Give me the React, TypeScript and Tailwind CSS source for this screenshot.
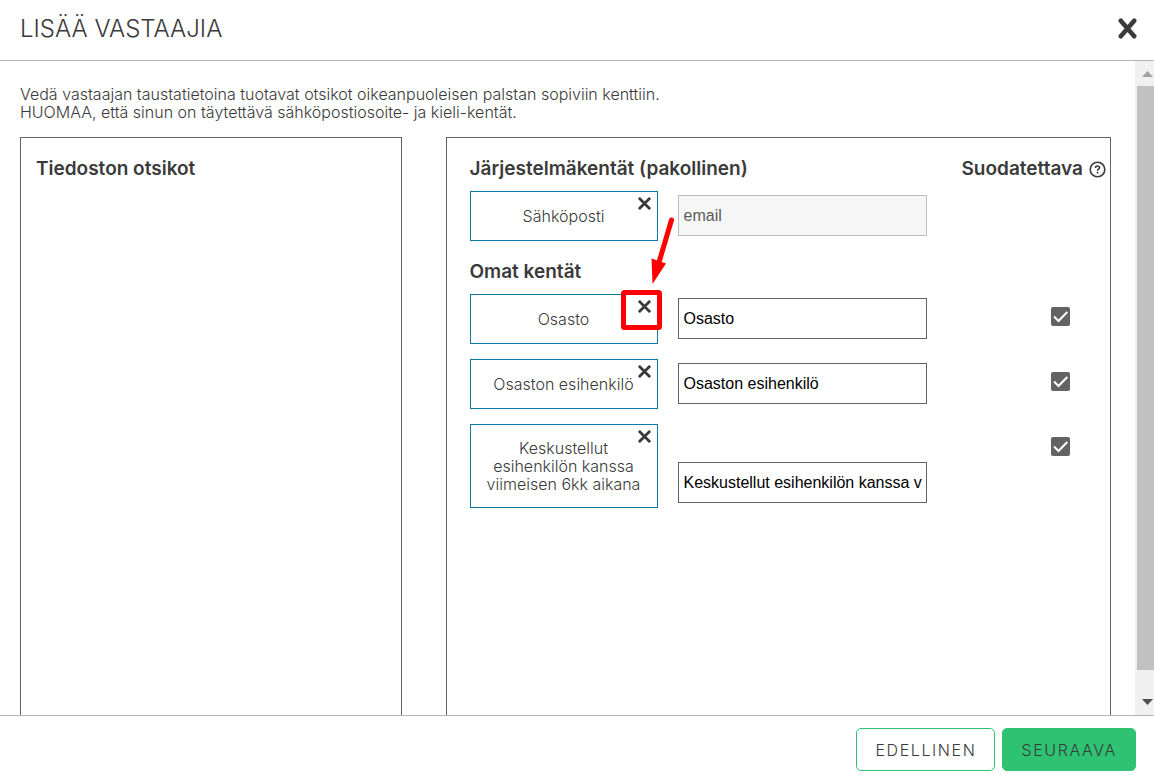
import { useState } from "react";

type Field = {
  id: string;
  label: string;
  value: string;
  highlighted?: boolean;
};

const ownFields: Field[] = [
  { id: "osasto", label: "Osasto", value: "Osasto", highlighted: true },
  {
    id: "esihenkilo",
    label: "Osaston esihenkilö",
    value: "Osaston esihenkilö",
  },
  {
    id: "keskustellut",
    label: "Keskustellut esihenkilön kanssa viimeisen 6kk aikana",
    value: "Keskustellut esihenkilön kanssa viimeisen 6kk aikana",
  },
];

function CloseIcon({ className }: { className: string }) {
  return (
    <svg
      viewBox="0 0 13 13"
      className={className}
      fill="none"
      stroke="currentColor"
      strokeWidth="2.8"
      aria-hidden="true"
    >
      <path d="M.9.9 12.1 12.1M12.1.9.9 12.1" />
    </svg>
  );
}

// Red frame round the remove button, with the arrow that points at it
function Highlight() {
  return (
    <svg
      viewBox="0 0 60 120"
      className="pointer-events-none absolute -top-[82px] -right-[22px] z-10 h-[120px] w-[60px]"
      fill="none"
      aria-hidden="true"
    >
      <rect
        x="4.5"
        y="79.5"
        width="36"
        height="35"
        rx="1"
        stroke="#ff0000"
        strokeWidth="5"
      />
      <path
        d="M52.5 7 39.5 51"
        stroke="#ff0000"
        strokeWidth="5"
        strokeLinecap="round"
      />
      <path d="M32.5 45.5 47 50.5 33.5 71Z" fill="#ff0000" />
    </svg>
  );
}

function Chip({ label, highlighted }: { label: string; highlighted?: boolean }) {
  return (
    <div className="relative flex min-h-[50px] w-[188px] shrink-0 items-center justify-center border border-[#0a7aa8] px-2 pt-[14px] pb-[14px] text-center text-base leading-[18px] font-light">
      {label}
      <button
        type="button"
        aria-label={`Poista ${label}`}
        className="absolute top-[5px] right-[6px]"
      >
        <CloseIcon className="size-[13px]" />
      </button>
      {highlighted && <Highlight />}
    </div>
  );
}

function FieldRow({ field }: { field: Field }) {
  const [value, setValue] = useState(field.value);
  return (
    <div className="flex items-end gap-5 pr-10">
      <Chip label={field.label} highlighted={field.highlighted} />
      <input
        type="text"
        aria-label={field.label}
        value={value}
        onChange={(e) => setValue(e.target.value)}
        className="mb-[5px] h-[41px] w-[249px] border border-[#636363] bg-white pr-1 pl-[5px] font-['Liberation_Sans',sans-serif] text-base text-black"
      />
      <span className="relative mt-[13px] ml-auto size-[19px] self-start">
        <input
          type="checkbox"
          defaultChecked
          aria-label={`Suodatettava: ${field.label}`}
          className="peer block size-[19px] appearance-none rounded-xs border-2 border-[#636363] bg-white checked:bg-[#636363]"
        />
        <svg
          viewBox="0 0 19 19"
          className="pointer-events-none absolute inset-0 hidden peer-checked:block"
          fill="none"
          stroke="white"
          strokeWidth="2"
          aria-hidden="true"
        >
          <path d="M3 9.5 7.5 14 16.3 5" />
        </svg>
      </span>
    </div>
  );
}

export default function App() {
  return (
    <div className="flex h-screen flex-col bg-white font-[Inter,sans-serif] text-[#3a3a3a]">
      {/* Header */}
      <header className="flex h-[61px] shrink-0 items-center justify-between border-b border-[#b5b5b5] pr-[17px] pb-[3px] pl-5">
        <h1 className="text-2xl leading-7 font-light">LISÄÄ VASTAAJIA</h1>
        <button type="button" aria-label="Sulje">
          <svg
            viewBox="0 0 19 21"
            className="h-[21px] w-[19px]"
            fill="none"
            stroke="currentColor"
            strokeWidth="4.6"
            strokeLinecap="round"
            aria-hidden="true"
          >
            <path d="M2.8 2.8 16.2 18.2M16.2 2.8 2.8 18.2" />
          </svg>
        </button>
      </header>

      <div className="flex min-h-0 flex-1">
        {/* Content */}
        <main className="flex min-w-0 flex-1 flex-col overflow-hidden pt-6 pr-6 pl-5">
          <p className="text-base leading-[18px] font-light">
            Vedä vastaajan taustatietoina tuotavat otsikot oikeanpuoleisen
            palstan sopiviin kenttiin.
            <br />
            HUOMAA, että sinun on täytettävä sähköpostiosoite- ja kieli-kentät.
          </p>

          <div className="mt-4 flex min-h-0 flex-1 justify-between">
            <section className="w-[35%] border border-b-0 border-[#636363] px-[15px] pt-[21px]">
              <h2 className="text-[19px] leading-5 font-semibold">
                Tiedoston otsikot
              </h2>
            </section>

            <section className="w-[61%] border border-b-0 border-[#636363] pt-[21px] pl-[23px]">
              <div className="mb-3 flex items-center justify-between pr-1">
                <h2 className="text-[19px] leading-5 font-semibold">
                  Järjestelmäkentät (pakollinen)
                </h2>
                <div className="flex items-center gap-[6px] text-[19px] leading-5 font-semibold">
                  Suodatettava
                  <button type="button" aria-label="Ohje">
                    <svg
                      viewBox="0 0 17 17"
                      className="size-[17px]"
                      fill="none"
                      stroke="currentColor"
                      strokeWidth="1.6"
                      aria-hidden="true"
                    >
                      <circle cx="8.5" cy="8.5" r="7.3" />
                      <path d="M6.5 7c0-1.3.9-2 2-2s2 .7 2 1.8c0 1.4-2 1.5-2 3" />
                      <path d="M8.5 10.8v1.7" />
                    </svg>
                  </button>
                </div>
              </div>
              <div className="flex items-end gap-5">
                <Chip label="Sähköposti" />
                <input
                  type="text"
                  aria-label="Sähköposti"
                  value="email"
                  disabled
                  className="mb-[5px] h-[41px] w-[249px] border border-[#bcbcbc] bg-[#f6f6f6] pr-1 pl-[5px] font-['Liberation_Sans',sans-serif] text-base text-[#5c5c5c]"
                />
              </div>

              <h2 className="mt-[21px] mb-3 text-[19px] leading-5 font-semibold">
                Omat kentät
              </h2>
              <div className="flex flex-col gap-[15px]">
                {ownFields.map((field) => (
                  <FieldRow key={field.id} field={field} />
                ))}
              </div>
            </section>
          </div>
        </main>

        {/* Scrollbar */}
        <div
          className="flex w-[19px] shrink-0 flex-col items-end bg-[#f0f0f0]"
          aria-hidden="true"
        >
          <svg viewBox="0 0 17 25" className="h-[25px] w-[17px]">
            <path d="M5 16 10.5 10 16 16Z" fill="#a3a3a3" />
          </svg>
          <div className="w-[17px] flex-1 bg-[#c1c1c1]" />
          <svg viewBox="0 0 17 45" className="h-[45px] w-[17px]">
            <path d="M5 29 16 29 10.5 35Z" fill="#505050" />
          </svg>
        </div>
      </div>

      {/* Footer */}
      <footer className="flex shrink-0 justify-end gap-[7px] border-t border-[#b5b5b5] pt-3 pr-[18px] pb-[7px]">
        <button
          type="button"
          className="h-[43px] rounded-[5px] border border-[#2dc372] px-[18px] text-base font-light tracking-widest"
        >
          EDELLINEN
        </button>
        <button
          type="button"
          className="h-[43px] rounded-[5px] border border-[#2dc372] bg-[#2dc372] px-[18px] text-base font-light tracking-widest"
        >
          SEURAAVA
        </button>
      </footer>
    </div>
  );
}
